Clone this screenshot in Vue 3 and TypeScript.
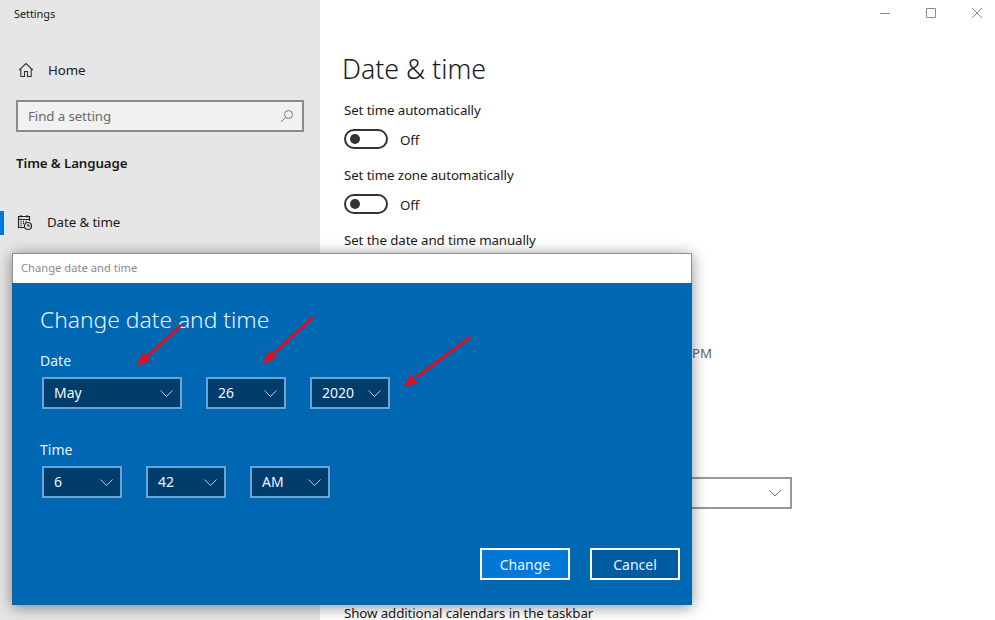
<script setup lang="ts">
interface Field { value: string; width: number }
const dateFields: Field[] = [
  { value: 'May', width: 140 },
  { value: '26', width: 80 },
  { value: '2020', width: 80 },
]
const timeFields: Field[] = [
  { value: '6', width: 80 },
  { value: '42', width: 80 },
  { value: 'AM', width: 80 },
]
const toggles = ['Set time automatically', 'Set time zone automatically']
const arrows = [
  { x1: 181, y1: 325, x2: 136, y2: 366 },
  { x1: 313, y1: 317, x2: 262, y2: 364 },
  { x1: 470, y1: 337, x2: 403, y2: 387 },
]
function head(a: { x1: number; y1: number; x2: number; y2: number }): string {
  const dx = a.x1 - a.x2
  const dy = a.y1 - a.y2
  const len = Math.hypot(dx, dy)
  const ux = dx / len
  const uy = dy / len
  const bx = a.x2 + ux * 14
  const by = a.y2 + uy * 14
  return `${a.x2},${a.y2} ${bx - uy * 5.5},${by + ux * 5.5} ${bx + uy * 5.5},${by - ux * 5.5}`
}
</script>

<template>
  <div class="window">
    <aside class="side">
      <div class="app-title">Settings</div>
      <div class="home">
        <svg class="home-icon" width="16" height="16" viewBox="0 0 16 16" fill="none" stroke="#333" stroke-width="1.1">
          <path d="M1 8.2 8 1.5l7 6.7M2.8 6.8v7.7h3.7V9.5h3v5h3.7V6.8" />
        </svg>
        <span>Home</span>
      </div>
      <div class="search">
        <span>Find a setting</span>
        <svg width="14" height="14" viewBox="0 0 14 14" fill="none" stroke="#777" stroke-width="1">
          <circle cx="8.5" cy="5.5" r="4" />
          <path d="M5.6 8.4 1 13" />
        </svg>
      </div>
      <div class="section">Time &amp; Language</div>
      <div class="nav">
        <span class="marker"></span>
        <svg class="cal" width="16" height="17" viewBox="0 0 16 17" fill="none" stroke="#222" stroke-width="1.2">
          <path d="M7 13.5H1.5V2.5h11V7M1.5 5.5h11M4 1v2.5M10 1v2.5" />
          <path d="M3.5 7.5h1M6 7.5h1M8.5 7.5h1M3.5 9.5h1M6 9.5h1M3.5 11.5h1" stroke-width="1.4" />
          <circle cx="11" cy="12" r="3.5" />
          <path d="M11 10v2h2" />
        </svg>
        <span>Date &amp; time</span>
      </div>
    </aside>

    <main class="main">
      <div class="controls">
        <svg width="10" height="10" viewBox="0 0 10 10" stroke="#8a8a8a" fill="none"><path d="M0 5.5h10" /></svg>
        <svg width="10" height="10" viewBox="0 0 10 10" stroke="#8a8a8a" fill="none"><path d="M.5.5h9v9h-9z" /></svg>
        <svg width="10" height="10" viewBox="0 0 10 10" stroke="#8a8a8a" fill="none"><path d="M0 0l10 10M10 0 0 10" /></svg>
      </div>
      <h1>Date &amp; time</h1>
      <div v-for="t in toggles" :key="t" class="setting">
        <div class="label">{{ t }}</div>
        <div class="toggle-row">
          <span class="toggle"><span class="knob"></span></span>
          <span class="state">Off</span>
        </div>
      </div>
      <div class="label manual">Set the date and time manually</div>
      <div class="pm">PM</div>
      <div class="zone">
        <svg width="14" height="8" viewBox="0 0 14 8" fill="none" stroke="#777"><path d="M1 1l6 6 6-6" /></svg>
      </div>
      <div class="label calendars">Show additional calendars in the taskbar</div>
    </main>

    <section class="dialog">
      <div class="dialog-title">Change date and time</div>
      <div class="dialog-body">
        <h2>Change date and time</h2>
        <div class="field-label date-label">Date</div>
        <div class="selects">
          <div v-for="f in dateFields" :key="f.value" class="select" :style="{ width: f.width + 'px' }">
            <span>{{ f.value }}</span>
            <svg width="13" height="7" viewBox="0 0 13 7" fill="none" stroke="#c9dff0" stroke-width="0.9"><path d="M.5.5l6 6 6-6" /></svg>
          </div>
        </div>
        <div class="field-label time-label">Time</div>
        <div class="selects">
          <div v-for="f in timeFields" :key="f.value" class="select" :style="{ width: f.width + 'px' }">
            <span>{{ f.value }}</span>
            <svg width="13" height="7" viewBox="0 0 13 7" fill="none" stroke="#c9dff0" stroke-width="0.9"><path d="M.5.5l6 6 6-6" /></svg>
          </div>
        </div>
        <div class="buttons">
          <div class="btn primary">Change</div>
          <div class="btn secondary">Cancel</div>
        </div>
      </div>
    </section>

    <svg class="arrows" width="995" height="620" viewBox="0 0 995 620">
      <g v-for="(a, i) in arrows" :key="i">
        <line :x1="a.x1" :y1="a.y1" :x2="(a.x1 + a.x2 * 4) / 5" :y2="(a.y1 + a.y2 * 4) / 5" stroke="#d8121f" stroke-width="3" />
        <polygon :points="head(a)" fill="#d8121f" />
      </g>
    </svg>
  </div>
</template>

<style scoped>
.window {
  position: relative;
  display: flex;
  width: 995px;
  height: 620px;
  overflow: hidden;
  background: #fff;
  color: #1a1a1a;
  font-family: "Noto Sans", "Liberation Sans", sans-serif;
  font-size: 13.3px;
  letter-spacing: -0.1px;
  line-height: 20px;
}
.side {
  width: 320px;
  flex: none;
  background: #e6e6e6;
  display: flex;
  flex-direction: column;
}
.app-title {
  font-size: 11px;
  line-height: 16px;
  padding: 6px 0 0 14px;
}
.home {
  display: flex;
  align-items: center;
  gap: 14px;
  margin-top: 38px;
  padding-left: 18px;
  height: 20px;
}
.search {
  display: flex;
  align-items: center;
  justify-content: space-between;
  box-sizing: border-box;
  width: 288px;
  height: 32px;
  margin: 20px 0 0 16px;
  padding: 0 8px 0 10px;
  border: 2px solid #8c8c8c;
  background: #f1f1f1;
  color: #6b6b6b;
}
.section {
  margin: 21px 0 0 16px;
  font-weight: 600;
}
.nav {
  position: relative;
  display: flex;
  align-items: center;
  gap: 14px;
  margin-top: 37px;
  padding-left: 17px;
  height: 24px;
}
.marker {
  position: absolute;
  left: 0;
  top: 1px;
  width: 4px;
  height: 24px;
  background: #0078d7;
}
.main {
  position: relative;
  flex: 1;
  padding-left: 24px;
}
.controls {
  position: absolute;
  top: 8px;
  right: 13px;
  display: flex;
  gap: 36px;
}
h1 {
  margin: 0 0 12px -2px;
  padding-top: 50px;
  font-size: 26.7px;
  line-height: 38px;
  font-weight: 300;
  letter-spacing: 0;
  color: #1a1a1a;
}
.label {
  height: 20px;
}
.toggle-row {
  display: flex;
  align-items: center;
  gap: 12px;
  height: 20px;
  margin-top: 9px;
  margin-bottom: 16px;
}
.state {
  padding-top: 2px;
}
.toggle {
  box-sizing: border-box;
  width: 44px;
  height: 20px;
  border: 2px solid #333;
  border-radius: 10px;
  display: flex;
  align-items: center;
  padding-left: 4px;
}
.knob {
  width: 10px;
  height: 10px;
  border-radius: 50%;
  background: #333;
}
.pm {
  margin: 93px 0 0 348px;
  color: #666;
}
.zone {
  box-sizing: border-box;
  display: flex;
  align-items: center;
  justify-content: flex-end;
  width: 448px;
  height: 32px;
  margin-top: 114px;
  padding-right: 8px;
  border: 2px solid #999;
}
.calendars {
  margin-top: 94px;
}
.dialog {
  position: absolute;
  left: 12px;
  top: 253px;
  width: 680px;
  height: 352px;
  display: flex;
  flex-direction: column;
  box-shadow: 0 2px 14px rgba(0, 0, 0, 0.45);
  font-size: 14px;
  letter-spacing: 0;
}
.dialog-title {
  box-sizing: border-box;
  height: 30px;
  padding: 5px 0 0 8px;
  background: #fff;
  border: 1px solid #8f8f8f;
  border-bottom: none;
  color: #8a8a8a;
  font-size: 11.2px;
  line-height: 18px;
}
.dialog-body {
  flex: 1;
  display: flex;
  flex-direction: column;
  padding: 20px 12px 25px 28px;
  background: #0067b3;
  color: #fff;
}
h2 {
  margin: 0;
  font-size: 22.8px;
  line-height: 34px;
  font-weight: 300;
  color: #e6f2fb;
}
.field-label {
  height: 20px;
  color: #e6f2fb;
}
.date-label {
  margin-top: 14px;
}
.time-label {
  margin-top: 31px;
}
.selects {
  display: flex;
  gap: 24px;
  margin: 6px 0 0 2px;
}
.select {
  box-sizing: border-box;
  display: flex;
  align-items: center;
  justify-content: space-between;
  height: 32px;
  padding: 0 7px 0 10px;
  border: 2px solid #6ba5d8;
  background: #003c6c;
  color: #f2f7fb;
}
.buttons {
  display: flex;
  justify-content: flex-end;
  gap: 20px;
  margin-top: auto;
}
.btn {
  box-sizing: border-box;
  width: 90px;
  height: 32px;
  padding-top: 1px;
  display: flex;
  align-items: center;
  justify-content: center;
  border: 2px solid #fff;
  color: #eaf3fb;
}
.primary {
  background: #0078d7;
}
.secondary {
  background: #005ba1;
}
.arrows {
  position: absolute;
  left: 0;
  top: 0;
  pointer-events: none;
}
</style>
